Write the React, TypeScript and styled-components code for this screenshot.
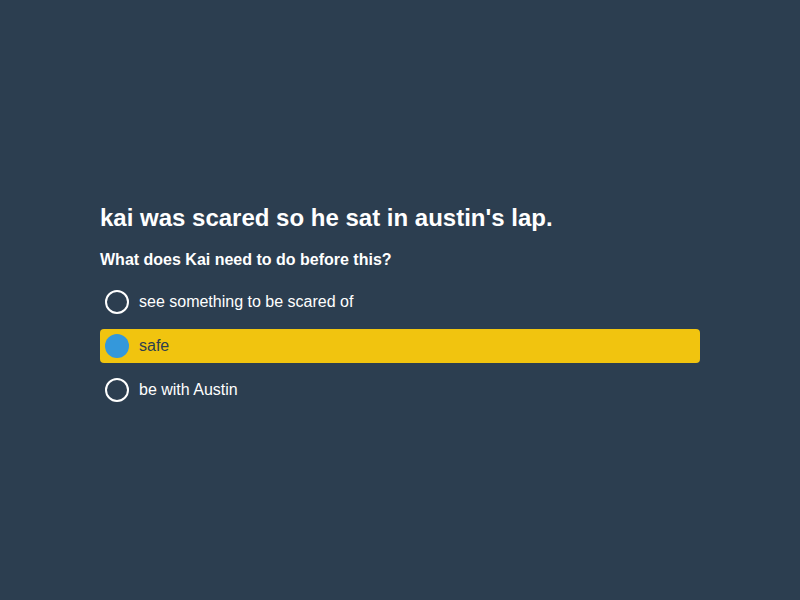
import React, { useState } from "react";
import styled, { createGlobalStyle } from "styled-components";

const Global = createGlobalStyle`
  html, body { margin: 0; padding: 0; background: #2c3e50; }
  body { font-family: "Liberation Sans", Arial, sans-serif; color: #ffffff; }
`;

const Page = styled.div`
  min-height: 100vh;
  padding-top: 204px;
  box-sizing: border-box;
  display: flex;
  justify-content: center;
`;

const Card = styled.div`
  width: 600px;
  display: flex;
  flex-direction: column;
`;

const Title = styled.h1`
  margin: 0 0 18px;
  font-size: 24px;
  line-height: 28px;
  font-weight: bold;
`;

const Question = styled.h2`
  margin: 0 0 16px;
  font-size: 16px;
  line-height: 19px;
  font-weight: bold;
`;

const Options = styled.div`
  display: flex;
  flex-direction: column;
  gap: 10px;
`;

const Option = styled.div<{ $selected: boolean }>`
  height: 34px;
  display: flex;
  align-items: center;
  gap: 10px;
  padding: 0 5px;
  border-radius: 4px;
  background: ${(p) => (p.$selected ? "#f1c40f" : "transparent")};
  color: ${(p) => (p.$selected ? "#2c3e50" : "#ffffff")};
  font-size: 16px;
  cursor: pointer;
`;

const Radio = styled.span<{ $selected: boolean }>`
  width: 24px;
  height: 24px;
  box-sizing: border-box;
  border-radius: 50%;
  flex: none;
  border: ${(p) => (p.$selected ? "none" : "2px solid #ffffff")};
  background: ${(p) => (p.$selected ? "#3498db" : "transparent")};
`;

const answers = ["see something to be scared of", "safe", "be with Austin"];

export default function App() {
  const [sel, setSel] = useState(1);
  return (
    <>
      <Global />
      <Page>
        <Card>
          <Title>kai was scared so he sat in austin's lap.</Title>
          <Question>What does Kai need to do before this?</Question>
          <Options>
            {answers.map((a, i) => (
              <Option key={a} $selected={sel === i} onClick={() => setSel(i)}>
                <Radio $selected={sel === i} />
                {a}
              </Option>
            ))}
          </Options>
        </Card>
      </Page>
    </>
  );
}
